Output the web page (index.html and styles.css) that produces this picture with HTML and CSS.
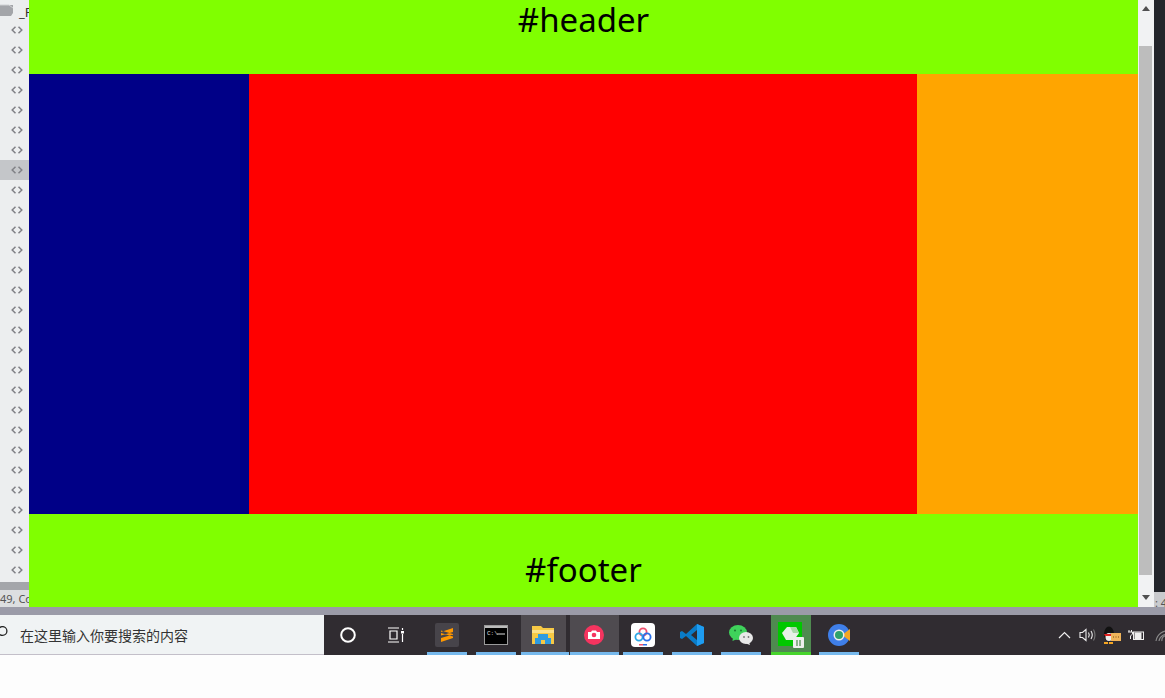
FILE: index.html
```html
<!DOCTYPE html>
<html lang="en">

<head>
    <meta charset="UTF-8">
    <meta name="viewport" content="width=device-width, initial-scale=1.0">
    <title>Holy grail layout</title>
    <link rel="stylesheet" href="styles.css">
</head>

<body>
    <svg class="defs" width="0" height="0">
        <symbol id="tag" viewBox="0 0 12 8">
            <path d="M4.5 .8L1.2 4L4.5 7.2M7.5 .8L10.8 4L7.5 7.2" fill="none" stroke="#808186" stroke-width="1.5" />
        </symbol>
    </svg>

    <div class="desktop">
        <!-- Editor file tree behind the browser -->
        <div class="tree">
            <div class="tree-list">
                <div class="tree-top">
                    <svg class="folder" width="14" height="17" viewBox="0 0 14 17">
                        <path d="M0 5H13V13L11 16H0Z" fill="#a3a5a9" />
                        <path d="M0 5H9L13 8" fill="none" stroke="#d0d2d4" stroke-width="1" />
                    </svg>
                    <span class="tree-name">_F</span>
                </div>
                <div class="tree-row"><svg width="12" height="8"><use href="#tag" /></svg></div>
                <div class="tree-row"><svg width="12" height="8"><use href="#tag" /></svg></div>
                <div class="tree-row"><svg width="12" height="8"><use href="#tag" /></svg></div>
                <div class="tree-row"><svg width="12" height="8"><use href="#tag" /></svg></div>
                <div class="tree-row"><svg width="12" height="8"><use href="#tag" /></svg></div>
                <div class="tree-row"><svg width="12" height="8"><use href="#tag" /></svg></div>
                <div class="tree-row"><svg width="12" height="8"><use href="#tag" /></svg></div>
                <div class="tree-row active"><svg width="12" height="8"><use href="#tag" /></svg></div>
                <div class="tree-row"><svg width="12" height="8"><use href="#tag" /></svg></div>
                <div class="tree-row"><svg width="12" height="8"><use href="#tag" /></svg></div>
                <div class="tree-row"><svg width="12" height="8"><use href="#tag" /></svg></div>
                <div class="tree-row"><svg width="12" height="8"><use href="#tag" /></svg></div>
                <div class="tree-row"><svg width="12" height="8"><use href="#tag" /></svg></div>
                <div class="tree-row"><svg width="12" height="8"><use href="#tag" /></svg></div>
                <div class="tree-row"><svg width="12" height="8"><use href="#tag" /></svg></div>
                <div class="tree-row"><svg width="12" height="8"><use href="#tag" /></svg></div>
                <div class="tree-row"><svg width="12" height="8"><use href="#tag" /></svg></div>
                <div class="tree-row"><svg width="12" height="8"><use href="#tag" /></svg></div>
                <div class="tree-row"><svg width="12" height="8"><use href="#tag" /></svg></div>
                <div class="tree-row"><svg width="12" height="8"><use href="#tag" /></svg></div>
                <div class="tree-row"><svg width="12" height="8"><use href="#tag" /></svg></div>
                <div class="tree-row"><svg width="12" height="8"><use href="#tag" /></svg></div>
                <div class="tree-row"><svg width="12" height="8"><use href="#tag" /></svg></div>
                <div class="tree-row"><svg width="12" height="8"><use href="#tag" /></svg></div>
                <div class="tree-row"><svg width="12" height="8"><use href="#tag" /></svg></div>
                <div class="tree-row"><svg width="12" height="8"><use href="#tag" /></svg></div>
                <div class="tree-row"><svg width="12" height="8"><use href="#tag" /></svg></div>
                <div class="tree-row"><svg width="12" height="8"><use href="#tag" /></svg></div>
            </div>
            <div class="tree-scroll"></div>
            <div class="status">49, Co</div>
        </div>

        <!-- The page in the browser -->
        <div class="page">
            <div id="header">#header</div>
            <div class="middle">
                <div id="left"></div>
                <div id="center"></div>
                <div id="right"></div>
            </div>
            <div id="footer">#footer</div>
        </div>

        <div class="scrollbar">
            <svg width="8" height="5" viewBox="0 0 8 5"><path d="M4 0L8 5H0Z" fill="#505050" /></svg>
            <div class="thumb"></div>
            <svg width="8" height="5" viewBox="0 0 8 5"><path d="M0 0H8L4 5Z" fill="#505050" /></svg>
        </div>

        <div class="editor-edge">
            <div class="editor-code"></div>
            <div class="editor-status">: 4</div>
        </div>
    </div>

    <div class="window-strip"></div>

    <div class="taskbar">
        <div class="search">
            <svg class="search-icon" width="9" height="12" viewBox="0 0 9 12">
                <circle cx="2.5" cy="5" r="4.4" fill="none" stroke="#222" stroke-width="1.3" />
            </svg>
            <span>在这里输入你要搜索的内容</span>
        </div>

        <div class="sys-btn">
            <svg width="18" height="18" viewBox="0 0 18 18">
                <circle cx="9" cy="9" r="6.8" fill="none" stroke="#fff" stroke-width="2" />
            </svg>
        </div>
        <div class="sys-btn">
            <svg width="18" height="16" viewBox="0 0 18 16" fill="none" stroke="#fff" stroke-width="1.2">
                <path d="M1 1H12M1 15H12M3 4H10V12H3ZM15.500 1V3M15.500 7V15" />
                <rect x="14" y="4" width="3" height="2.500" fill="#fff" stroke="none" />
            </svg>
        </div>

        <div class="apps">
            <div class="app open">
                <div class="sublime">
                    <svg width="14" height="16" viewBox="0 0 14 16">
                        <path d="M13 1V5L1 8.500V5ZM13 7.500V11L1 15V11ZM1 6L13 9.500V7L1 3.500Z" fill="#ff9800" />
                    </svg>
                </div>
            </div>
            <div class="app open">
                <svg width="24" height="20" viewBox="0 0 24 20">
                    <rect x=".5" y=".5" width="23" height="19" fill="#000" stroke="#9a9a9a" />
                    <rect x="1" y="1" width="22" height="2" fill="#bbb" />
                    <text x="3" y="10" class="cmd-text">C:\</text>
                    <path d="M13 9H21" stroke="#ddd" />
                </svg>
            </div>
            <div class="app open current folder-app">
                <svg width="22" height="20" viewBox="0 0 22 20">
                    <path d="M0 1H9L11 3H22V19H0Z" fill="#f6c945" />
                    <path d="M0 5H22V8H0Z" fill="#fbe08a" />
                    <path d="M6 9H16V13H19V19H3V13H6Z" fill="#2e9be0" />
                    <rect x="9" y="15" width="4" height="4" fill="#f6c945" />
                </svg>
            </div>
            <div class="app open current">
                <svg width="20" height="20" viewBox="0 0 20 20">
                    <circle cx="10" cy="10" r="10" fill="#f5345f" />
                    <path d="M4 7H7L8 5.500H12L13 7H16V14H4Z" fill="#fff" />
                    <circle cx="10" cy="10" r="2.300" fill="#f5345f" />
                </svg>
            </div>
            <div class="app open">
                <svg width="24" height="24" viewBox="0 0 24 24">
                    <rect width="24" height="24" rx="4" fill="#fff" />
                    <circle cx="12" cy="9" r="3.600" fill="none" stroke="#f0506e" stroke-width="1.800" />
                    <circle cx="8" cy="14" r="3.600" fill="none" stroke="#2aa8e8" stroke-width="1.800" />
                    <circle cx="16" cy="14" r="3.600" fill="none" stroke="#2a6fe8" stroke-width="1.800" />
                    <rect x="8" y="21" width="4" height="1.500" fill="#f0506e" />
                    <rect x="12" y="21" width="4" height="1.500" fill="#2a6fe8" />
                </svg>
            </div>
            <div class="app open">
                <svg width="24" height="24" viewBox="0 0 24 24">
                    <path d="M17 1L24 4V20L17 23L6 13L2 16L0 15V9L2 8L6 11ZM17 7L11 12L17 17Z" fill="#0a7cc8" />
                    <path d="M17 1L24 4V20L17 23V17V7Z" fill="#1e9cf0" />
                </svg>
            </div>
            <div class="app open">
                <svg width="24" height="22" viewBox="0 0 24 22">
                    <ellipse cx="9" cy="8.500" rx="9" ry="7.500" fill="#3fd25b" />
                    <path d="M4 13L3.500 17L8 15Z" fill="#3fd25b" />
                    <circle cx="6" cy="6.500" r="1" fill="#1a7a30" />
                    <circle cx="12" cy="6.500" r="1" fill="#1a7a30" />
                    <ellipse cx="17" cy="14" rx="7" ry="6" fill="#e8e8e8" />
                    <path d="M20 18L21 21L17 19.500Z" fill="#e8e8e8" />
                    <circle cx="15" cy="13" r=".9" fill="#777" />
                    <circle cx="19.500" cy="13" r=".9" fill="#777" />
                </svg>
            </div>
            <div class="app running">
                <svg width="26" height="26" viewBox="0 0 26 26">
                    <rect x="0" y="0" width="24" height="24" fill="#00c800" />
                    <path d="M4 11L9 5H18L21 11L16 18H8Z" fill="#e8f0e8" />
                    <path d="M12 5H18L21 11H15Z" fill="#a9d8a9" />
                    <rect x="15" y="15" width="11" height="11" rx="1" fill="#eee" />
                    <path d="M19 18V24M22 18V24" stroke="#4a8a4a" stroke-width="1.200" />
                </svg>
            </div>
            <div class="app open">
                <svg width="22" height="22" viewBox="0 0 22 22">
                    <circle cx="11" cy="11" r="11" fill="#3f7fe8" />
                    <path d="M22 5V17L14 11Z" fill="#f5a623" />
                    <circle cx="11" cy="11" r="5.500" fill="#eee" />
                    <circle cx="11" cy="11" r="4" fill="#2fa36b" />
                </svg>
            </div>
        </div>

        <div class="tray">
            <svg class="tray-up" width="13" height="8" viewBox="0 0 13 8">
                <path d="M1 7L6.500 1.500L12 7" fill="none" stroke="#eee" stroke-width="1.200" />
            </svg>
            <svg class="tray-sound" width="17" height="14" viewBox="0 0 17 14" fill="none" stroke="#eee" stroke-width="1.100">
                <path d="M1 4.500H3.500L7 1.500V12.500L3.500 9.500H1Z" />
                <path d="M9.500 4.500Q11 7 9.500 9.500M12 3Q14.500 7 12 11" />
                <path d="M14.500 1.500Q17.500 7 14.500 12.500" stroke="#777" />
            </svg>
            <svg class="tray-qq" width="18" height="18" viewBox="0 0 18 18">
                <ellipse cx="6" cy="8" rx="5" ry="7.500" fill="#111" />
                <ellipse cx="6" cy="11" rx="3.500" ry="4" fill="#eee" />
                <path d="M1 8H10L11 10H2Z" fill="#e02020" />
                <path d="M1 16H5V18H1ZM6 16H10V18H6Z" fill="#f5a623" />
                <rect x="8" y="7" width="10" height="8" fill="#f0b45a" />
                <path d="M10 11H11M12.500 11H13.500M15 11H16" stroke="#7a4a10" />
            </svg>
            <svg class="tray-power" width="16" height="12" viewBox="0 0 16 12">
                <rect x="5.500" y="3" width="10" height="7.500" fill="none" stroke="#eee" />
                <rect x="6.500" y="3.500" width="7" height="6.500" fill="#eee" />
                <path d="M1 1V3M3.500 1V3M0 3H4.500V5L2.500 7V10" fill="none" stroke="#eee" />
            </svg>
            <svg class="tray-wifi" width="16" height="14" viewBox="0 0 16 14" fill="none" stroke="#8a8a8a" stroke-width="1.200">
                <path d="M1 13A12 12 0 0 1 15 3M4 13A8 8 0 0 1 15 7M7 13A4 4 0 0 1 15 11" />
            </svg>
        </div>
    </div>

    <div class="below"></div>
</body>

</html>
```

FILE: styles.css
```css
body {
    margin: 0;
    height: 698px;
    overflow: hidden;
    background-color: #fff;
    font-family: "Noto Sans", "Noto Sans CJK SC", sans-serif;
}

.defs {
    display: block;
}

.desktop {
    display: flex;
    height: 607px;
}

/* file tree */
.tree {
    display: flex;
    flex-direction: column;
    width: 29px;
    flex-shrink: 0;
    background-color: #eceeef;
    overflow: hidden;
}

.tree-list {
    height: 582px;
}

.tree-top {
    display: flex;
    align-items: flex-start;
    height: 20px;
}

.folder {
    flex-shrink: 0;
    margin-right: 5px;
}

.tree-name {
    font-size: 13px;
    line-height: 24px;
    color: #333;
}

.tree-row {
    display: flex;
    align-items: center;
    height: 20px;
    padding-left: 11px;
}

.tree-row.active {
    background-color: #c4c6c9;
}

.tree-scroll {
    height: 8px;
    background-color: #a4a6aa;
}

.status {
    height: 17px;
    font-size: 11px;
    line-height: 17px;
    color: #555;
    white-space: nowrap;
    background-color: #dcdee0;
}

/* page in the browser */
.page {
    display: flex;
    flex-direction: column;
    width: 1109px;
    flex-shrink: 0;
    color: #000;
    font-size: 33px;
    text-align: center;
}

#header,
#footer {
    background-color: #80ff00;
}

#header {
    height: 74px;
    line-height: 40px;
}

#footer {
    height: 93px;
    line-height: 111px;
}

.middle {
    display: flex;
    height: 440px;
}

#left {
    width: 220px;
    background-color: #000087;
}

#center {
    width: 668px;
    background-color: #ff0000;
}

#right {
    width: 221px;
    background-color: #ffa500;
}

.scrollbar {
    display: flex;
    flex-direction: column;
    align-items: center;
    width: 16px;
    flex-shrink: 0;
    box-sizing: border-box;
    padding-top: 6px;
    background-color: #f1f2f3;
}

.thumb {
    width: 13px;
    height: 529px;
    margin: 35px 1px 20px 0;
    background-color: #bdbdbd;
}

.editor-edge {
    display: flex;
    flex-direction: column;
    flex-grow: 1;
    overflow: hidden;
}

.editor-code {
    height: 592px;
    flex-shrink: 0;
    background-color: #23252a;
}

.editor-status {
    height: 15px;
    padding-left: 1px;
    font-size: 11px;
    line-height: 22px;
    color: #555;
    white-space: nowrap;
    background-color: #c9cacd;
}

.window-strip {
    height: 8px;
    background-color: #9b9ba8;
}

/* taskbar */
.taskbar {
    display: flex;
    align-items: stretch;
    height: 40px;
    background-color: #302c31;
    overflow: hidden;
}

.search {
    display: flex;
    align-items: center;
    width: 324px;
    flex-shrink: 0;
    box-sizing: border-box;
    border-bottom: 1px solid #c3bfc9;
    background-color: #f0f3f4;
    font-size: 13px;
    color: #333;
}

.search-icon {
    flex-shrink: 0;
    margin: 0 11px 5px 0;
}

.search span {
    font-size: 14px;
}

.sys-btn {
    display: flex;
    align-items: center;
    justify-content: center;
    width: 48px;
    flex-shrink: 0;
}

.apps {
    display: flex;
    flex-shrink: 0;
    margin-left: 3px;
}

.app {
    display: flex;
    align-items: center;
    justify-content: center;
    position: relative;
    box-sizing: border-box;
    width: 49px;
    padding-right: 1px;
}

.app.open::after {
    content: "";
    position: absolute;
    left: 4px;
    right: 5px;
    bottom: 0;
    height: 3px;
    background-color: #76b9ed;
}

.app.current {
    background-color: #4f4b50;
}

.app.current::after {
    left: 0;
    right: 0;
}

.app.folder-app {
    width: 45px;
    margin-right: 4px;
}

.app.folder-app::after {
    right: -3px;
}

.app.running {
    background-color: #4f8a50;
    margin: 0 4px 0 5px;
    width: 40px;
    box-shadow: inset 0 -3px 0 #47d52c;
}

.sublime {
    display: flex;
    align-items: center;
    justify-content: center;
    width: 24px;
    height: 24px;
    border-radius: 2px;
    background-color: #47444a;
}

.cmd-text {
    font-family: "Liberation Mono", monospace;
    font-size: 6px;
    fill: #ddd;
}

.tray {
    display: flex;
    align-items: center;
    flex-shrink: 0;
    margin-left: 194px;
}

.tray svg {
    flex-shrink: 0;
}

.tray-sound {
    margin-left: 8px;
}

.tray-qq {
    margin-left: 7px;
}

.tray-power {
    margin-left: 7px;
}

.tray-wifi {
    margin-left: 11px;
}

.below {
    height: 43px;
    background-color: #fdfdfd;
}
```
